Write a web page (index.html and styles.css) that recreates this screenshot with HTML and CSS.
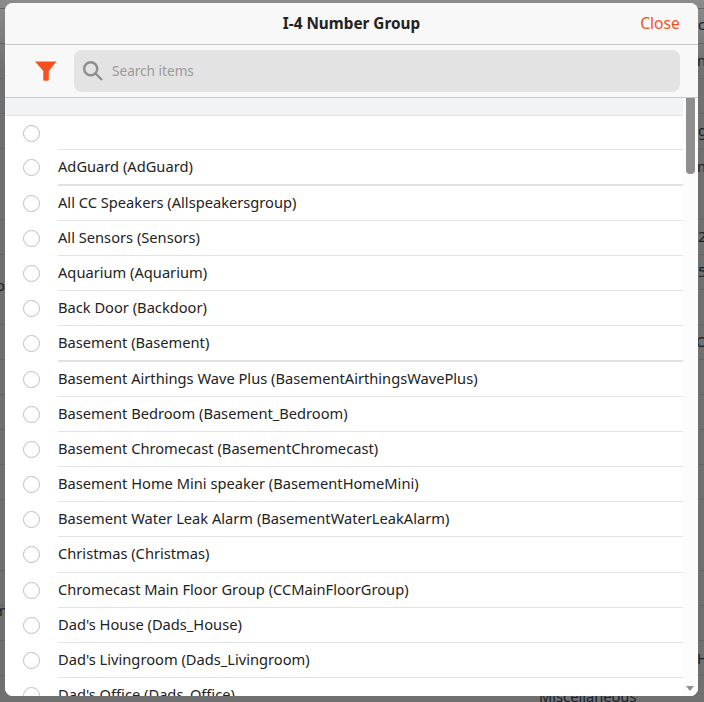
FILE: index.html
```html
<!DOCTYPE html>
<html lang="en">
<head>
<meta charset="utf-8">
<title>I-4 Number Group</title>
<link rel="stylesheet" href="styles.css">
</head>
<body>
<div class="backdrop">
  <span class="frag" style="left:698px;top:15px">c</span>
  <span class="frag" style="left:697px;top:51px">n</span>
  <span class="frag" style="left:698px;top:121px">g</span>
  <span class="frag" style="left:697px;top:157px">n</span>
  <span class="frag" style="left:698px;top:227px">2</span>
  <span class="frag" style="left:698px;top:262px">5</span>
  <span class="frag" style="left:696px;top:332px">O</span>
  <span class="frag" style="left:697px;top:649px">H</span>
  <span class="frag" style="left:-4px;top:276px">o</span>
  <span class="frag" style="left:-6px;top:601px">m</span>
  <span class="frag" style="left:539px;top:687px">Miscellaneous</span>
</div>
<main class="modal">
  <header class="head">
    <span class="spacer"></span>
    <h1 class="title">I-4 Number Group</h1>
    <span class="close">Close</span>
  </header>
  <div class="toolbar">
    <svg class="funnel" width="24" height="22" viewBox="0 0 24 22"><path d="M1 1.500h21.500L14.800 11v8.500c0 .8-.6 1.200-1.300 1.200h-3.200c-.6 0-1-.5-1-1.100V11z"/></svg>
    <label class="search">
      <svg class="lens" width="22" height="22" viewBox="0 0 22 22"><circle cx="8.700" cy="8.700" r="6.500"/><path d="M13.500 13.500l6.500 6.500"/></svg>
      <span class="placeholder">Search items</span>
    </label>
  </div>
  <div class="body">
    <div class="list">
      <div class="band"></div>
      <div class="row"><i class="radio"></i><div class="label"></div></div>
      <div class="row thick"><i class="radio"></i><div class="label">AdGuard (AdGuard)</div></div>
      <div class="row"><i class="radio"></i><div class="label">All CC Speakers (Allspeakersgroup)</div></div>
      <div class="row"><i class="radio"></i><div class="label">All Sensors (Sensors)</div></div>
      <div class="row"><i class="radio"></i><div class="label">Aquarium (Aquarium)</div></div>
      <div class="row"><i class="radio"></i><div class="label">Back Door (Backdoor)</div></div>
      <div class="row thick"><i class="radio"></i><div class="label">Basement (Basement)</div></div>
      <div class="row"><i class="radio"></i><div class="label">Basement Airthings Wave Plus (BasementAirthingsWavePlus)</div></div>
      <div class="row"><i class="radio"></i><div class="label">Basement Bedroom (Basement_Bedroom)</div></div>
      <div class="row"><i class="radio"></i><div class="label">Basement Chromecast (BasementChromecast)</div></div>
      <div class="row"><i class="radio"></i><div class="label">Basement Home Mini speaker (BasementHomeMini)</div></div>
      <div class="row"><i class="radio"></i><div class="label">Basement Water Leak Alarm (BasementWaterLeakAlarm)</div></div>
      <div class="row"><i class="radio"></i><div class="label">Christmas (Christmas)</div></div>
      <div class="row"><i class="radio"></i><div class="label">Chromecast Main Floor Group (CCMainFloorGroup)</div></div>
      <div class="row"><i class="radio"></i><div class="label">Dad's House (Dads_House)</div></div>
      <div class="row"><i class="radio"></i><div class="label">Dad's Livingroom (Dads_Livingroom)</div></div>
      <div class="row"><i class="radio"></i><div class="label">Dad's Office (Dads_Office)</div></div>
    </div>
    <div class="scrollbar">
      <div class="thumb"></div>
      <div class="arrow"></div>
    </div>
  </div>
</main>
</body>
</html>
```
FILE: styles.css
```css
* { box-sizing: border-box; }
html, body { margin: 0; height: 100%; overflow: hidden; }
body {
  position: relative;
  background: linear-gradient(#8c8c8c, #707070 70px);
  font-family: "Noto Sans", sans-serif;
  color: #222;
}
.backdrop {
  position: absolute;
  inset: 0;
  overflow: hidden;
  background: repeating-linear-gradient(transparent 0, transparent 34.100px, #646464 34.100px, #646464 35.100px) 0 9px;
}
.frag { position: absolute; font-size: 14.660px; line-height: 18px; color: #14202c; white-space: nowrap; }
.modal {
  position: absolute;
  left: 5px; top: 3px;
  width: 693px; height: 693px;
  border-radius: 8px;
  overflow: hidden;
  background: #fff;
  display: flex;
  flex-direction: column;
}
.head {
  height: 42px;
  flex: none;
  display: flex;
  align-items: center;
  justify-content: space-between;
  padding: 0 18px 2px;
  background: #f8f8f8;
  border-bottom: 1px solid #c8c8c8;
}
.spacer { width: 40px; }
.title { margin: 0; font-size: 15.300px; font-weight: 700; color: #222; }
.close { font-size: 15.700px; color: #f4511e; width: 40px; text-align: right; white-space: nowrap; }
.toolbar {
  height: 53px;
  flex: none;
  display: flex;
  align-items: center;
  gap: 16px;
  padding: 0 18px 0 29px;
  background: #f8f8f8;
  border-bottom: 1px solid #c8c8c8;
}
.funnel { fill: #f4511e; flex: none; }
.search {
  flex: 1;
  height: 42px;
  display: flex;
  align-items: center;
  gap: 8px;
  padding-left: 8px;
  border-radius: 8px;
  background: #e3e3e3;
}
.lens { fill: none; stroke: #8e8e8e; stroke-width: 2.400; flex: none; }
.placeholder { font-size: 13.600px; color: #9a9a9a; margin-bottom: 2px; }
.body { flex: 1; min-height: 0; display: flex; overflow: hidden; background: #fff; }
.list { flex: 1; min-width: 0; overflow: hidden; }
.band { height: 18px; background: #f2f3f5; border-bottom: 1px solid #e2e2e2; }
.row { height: 35.200px; display: flex; align-items: stretch; }
.band + .row { height: 34.400px; }
.radio {
  flex: none;
  width: 17px; height: 17px;
  margin: 9px 0 0 18px;
  border: 1px solid #bdbdbd;
  border-radius: 50%;
}
.label {
  flex: 1;
  margin-left: 18px;
  line-height: 33px;
  font-size: 14.660px;
  color: #222;
  white-space: nowrap;
  border-bottom: 1px solid #e2e2e2;
}
.thick .label { border-bottom-width: 2px; }
.scrollbar { position: relative; width: 15px; flex: none; background: #fcfcfc; }
.thumb { width: 9px; height: 76px; margin-left: 3px; border-radius: 0 0 4px 4px; background: #8f8f8f; }
.arrow {
  position: absolute;
  left: 3px; bottom: 5px;
  border-left: 4.500px solid transparent;
  border-right: 4.500px solid transparent;
  border-top: 5px solid #8f8f8f;
}
```
